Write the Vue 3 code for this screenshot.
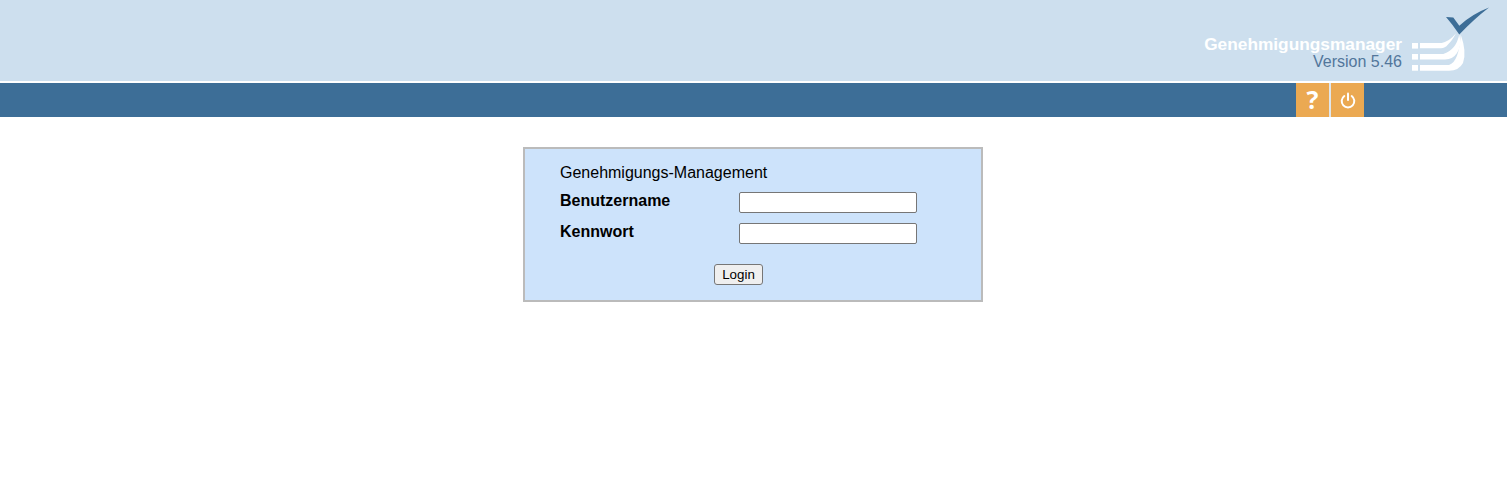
<script setup>
const title = 'Genehmigungs-Management'
</script>

<template>
  <div class="page">
    <header class="top">
      <div class="brand">
        <div class="brand-name">Genehmigungsmanager</div>
        <div class="brand-version">Version 5.46</div>
      </div>
      <svg class="logo" width="78" height="72" viewBox="0 0 78 72">
        <path d="M34 17 L41.300 17.500 L47.300 25.700 Q60 14 77 7.500 Q62 19 47.300 34.500 Q41 25 34 17 Z" fill="#3d6e97" />
        <g fill="#fff">
          <rect x="0" y="43" width="6" height="5.600" />
          <rect x="0" y="54" width="6" height="5.600" />
          <rect x="0" y="65" width="6" height="5.700" />
          <path d="M8 43 H29.700 Q38 41 44 33.300 Q40 41 36 44.500 Q33 48.300 29 48.300 H8 Z" />
          <path d="M8 54 H31.300 Q44 50 47.300 34.500 Q50 46 45 53 Q41 59.300 33 59.600 H8 Z" />
          <path d="M8 65 H37 Q47 62 48.700 34.500 Q55 52 51 63 Q47 70.700 37 70.700 H8 Z" />
        </g>
      </svg>
    </header>
    <nav class="bar">
      <button class="tool" type="button" aria-label="Hilfe"><span class="help">?</span></button>
      <button class="tool" type="button" aria-label="Abmelden">
        <svg width="16" height="17" viewBox="0 0 16 17" fill="none" stroke="#fff" stroke-width="2" stroke-linecap="round">
          <path d="M4.300 4 A6.300 6.300 0 1 0 11.700 4" />
          <path d="M8 1.500 V8" />
        </svg>
      </button>
    </nav>
    <main class="content">
      <form class="panel" @submit.prevent>
        <div class="panel-title">{{ title }}</div>
        <div class="field">
          <label class="label">Benutzername</label>
          <input class="input" type="text" />
        </div>
        <div class="field">
          <label class="label">Kennwort</label>
          <input class="input" type="password" />
        </div>
        <div class="actions"><button class="login" type="submit">Login</button></div>
      </form>
    </main>
  </div>
</template>

<style>
html, body { margin: 0; background: #fff; }
</style>

<style scoped>
.page { font-family: "Liberation Sans", Arial, sans-serif; color: #000; min-height: 491px; }
.top {
  height: 81px; background: #cddfee; display: flex; justify-content: flex-end;
  padding-right: 17px; box-sizing: border-box;
}
.brand { text-align: right; margin-right: 10px; padding-top: 35px; font-size: 16px; line-height: 18px; }
.brand-name { font-weight: 700; font-size: 17.3px; color: #fff; }
.brand-version { color: #52769b; }
.logo { display: block; }
.bar {
  margin-top: 2px; height: 34px; background: #3d6e97; display: flex;
  padding-left: 1296px; box-sizing: border-box;
}
.tool {
  width: 33px; height: 34px; padding: 0; border: 0; background: #eba952; color: #fff;
  display: flex; align-items: center; justify-content: center;
}
.tool + .tool { width: 35px; border-left: 2px solid #dfe6ec; }
.help { font: 700 25px/1 "Open Sans", sans-serif; margin-top: -2px; }
.content { display: flex; justify-content: center; padding-top: 30px; padding-right: 1px; }
.panel {
  width: 460px; height: 155px; box-sizing: border-box; border: 2px solid #bbbbbb;
  background: #cde3fb; padding: 15px 0 0 35px;
}
.panel-title { font-size: 16px; line-height: 18px; margin-bottom: 8px; }
.field { display: flex; align-items: flex-start; height: 31px; }
.label { width: 179px; font-size: 16px; font-weight: 700; line-height: 18px; padding-top: 2px; }
.input {
  width: 178px; height: 21px; box-sizing: border-box; margin: 2px 0 0; padding: 1px 2px;
  border: 1px solid #767676; border-radius: 2px; background: #fff;
}
.actions { padding-left: 154px; margin-top: 12px; }
.login {
  width: 49px; height: 21px; box-sizing: border-box; padding: 0; font: 13.333px "Liberation Sans", Arial, sans-serif;
  border: 1px solid #767676; border-radius: 3px; background: #efefef; color: #000;
}
</style>
